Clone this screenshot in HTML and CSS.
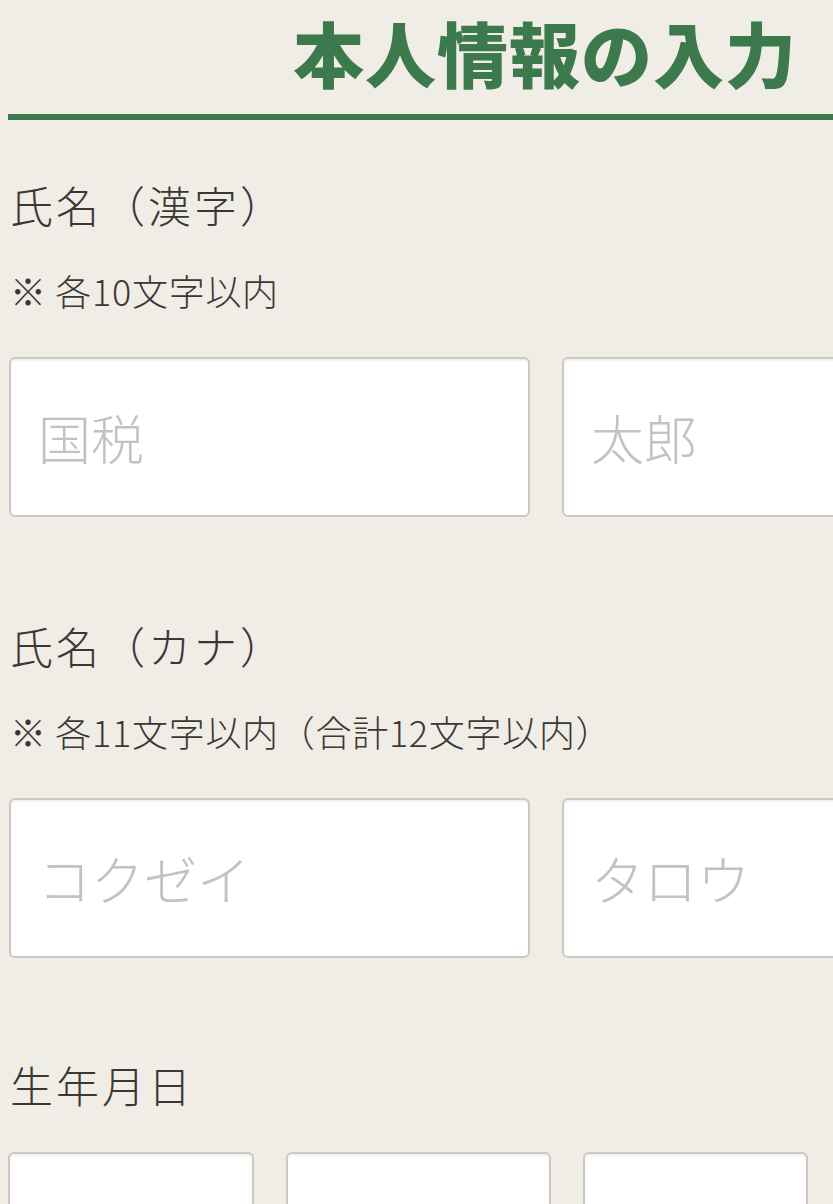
FILE: index.html
```html
<!DOCTYPE html>
<html lang="ja">
<head>
<meta charset="utf-8">
<title>本人情報の入力</title>
<link rel="stylesheet" href="styles.css">
</head>
<body>
<main class="page">
  <h1 class="title">本人情報の入力</h1>

  <section class="field">
    <h2 class="label">氏名（漢字）</h2>
    <p class="note">※ 各10文字以内</p>
    <div class="row">
      <input class="box box-half" type="text" placeholder="国税">
      <input class="box box-half" type="text" placeholder="太郎">
    </div>
  </section>

  <section class="field">
    <h2 class="label">氏名（カナ）</h2>
    <p class="note">※ 各11文字以内（合計12文字以内）</p>
    <div class="row">
      <input class="box box-half" type="text" placeholder="コクゼイ">
      <input class="box box-half" type="text" placeholder="タロウ">
    </div>
  </section>

  <section class="field field-date">
    <h2 class="label">生年月日</h2>
    <div class="row">
      <input class="box box-year" type="text">
      <input class="box box-month" type="text">
      <input class="box box-day" type="text">
    </div>
  </section>
</main>
</body>
</html>
```

FILE: styles.css
```css
html, body {
  margin: 0;
  padding: 0;
  background: #f0ede6;
  overflow: hidden;
}

body {
  font-family: "Noto Sans CJK JP", "Noto Sans", sans-serif;
  color: #3b3834;
}

.page {
  width: 1074px;
  margin-left: 8px;
  padding-top: 16px;
}

.title {
  margin: 0;
  font-size: 71px;
  line-height: 1;
  font-weight: 900;
  letter-spacing: 1px;
  color: #3c7a4e;
  text-align: center;
  padding-bottom: 27px;
  border-bottom: 6px solid #3c7a4e;
}

.field {
  margin-top: 63px;
}

.field + .field {
  margin-top: 107px;
}

.field + .field-date {
  margin-top: 105px;
}

.label {
  margin: 0;
  font-size: 43px;
  line-height: 1;
  font-weight: 300;
  letter-spacing: 3px;
  padding-left: 2px;
}

.note {
  margin: 46px 0 0;
  font-size: 36px;
  line-height: 1;
  font-weight: 300;
  letter-spacing: 0.7px;
  padding-left: 2px;
}

.row {
  display: flex;
  gap: 32px;
  margin-top: 49px;
}

.field-date .row {
  margin-top: 46px;
}

.box {
  box-sizing: border-box;
  height: 160px;
  margin: 0;
  padding: 0 0 0 27px;
  border: 2px solid #cdc9c0;
  border-radius: 6px;
  background: #ffffff;
  box-shadow: inset 0 2px 2px rgba(0, 0, 0, 0.06);
  font-family: "Noto Sans CJK JP", "Noto Sans", sans-serif;
  font-size: 53px;
  font-weight: 300;
  color: #3b3834;
  outline: none;
}

.box::placeholder {
  color: #c2c2c2;
  opacity: 1;
}

.box-half {
  width: 521px;
  margin-left: 1px;
}

.box-half + .box-half {
  margin-left: 0;
}

.box-year {
  width: 246px;
}

.box-month {
  width: 265px;
}

.box-day {
  width: 225px;
}
```
